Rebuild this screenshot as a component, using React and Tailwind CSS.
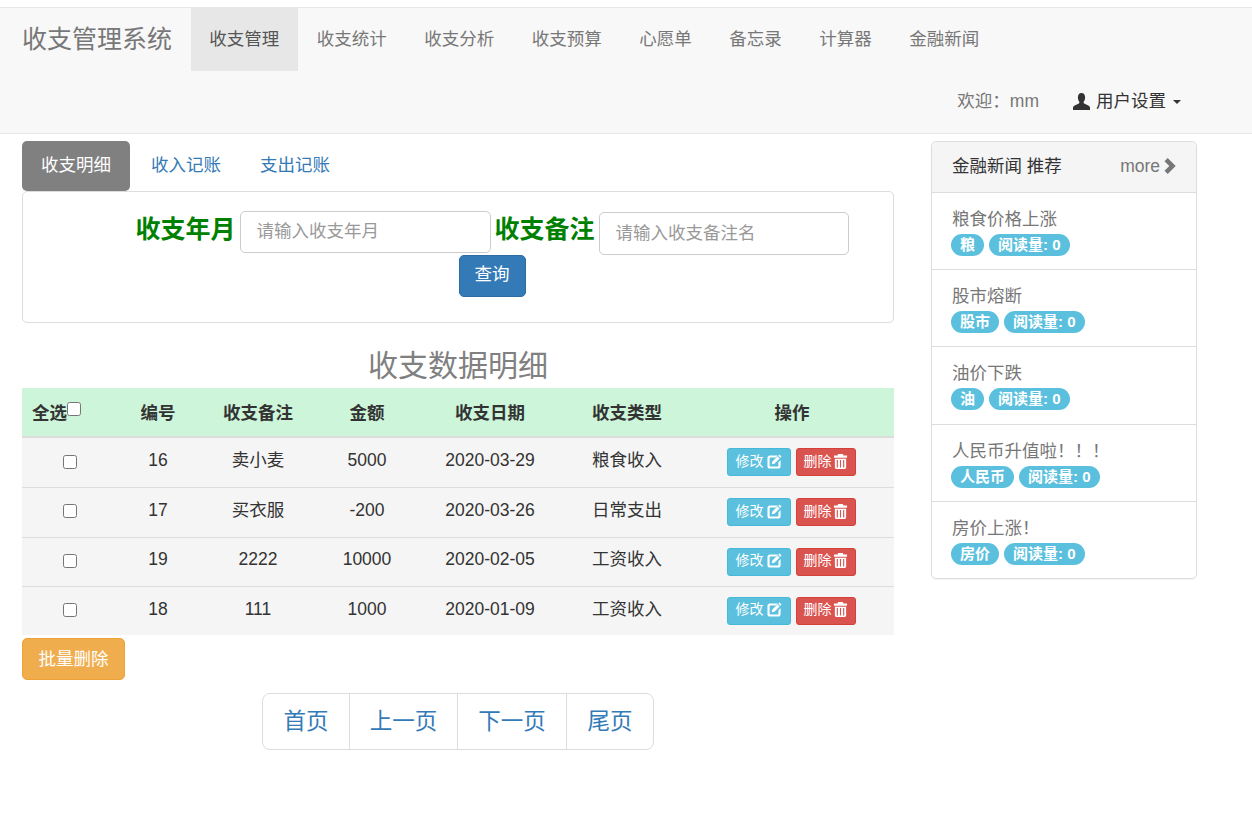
import React from "react";

const navItems = ["收支管理", "收支统计", "收支分析", "收支预算", "心愿单", "备忘录", "计算器", "金融新闻"];

const rows = [
  { id: 16, note: "卖小麦", amount: "5000", date: "2020-03-29", type: "粮食收入", h: "h-[50px]" },
  { id: 17, note: "买衣服", amount: "-200", date: "2020-03-26", type: "日常支出", h: "h-[50px]" },
  { id: 19, note: "2222", amount: "10000", date: "2020-02-05", type: "工资收入", h: "h-[49px]" },
  { id: 18, note: "111", amount: "1000", date: "2020-01-09", type: "工资收入", h: "h-[49px]" },
];

const news = [
  { title: "粮食价格上涨", tag: "粮", h: "h-[77px]" },
  { title: "股市熔断", tag: "股市", h: "h-[77px]" },
  { title: "油价下跌", tag: "油", h: "h-[78px]" },
  { title: "人民币升值啦！！！", tag: "人民币", h: "h-[77px]" },
  { title: "房价上涨！", tag: "房价", h: "h-[77px]" },
];

function UserIcon() {
  return (
    <svg viewBox="0 0 16 16" className="w-[17px] h-[17px] fill-[#333]">
      <path d="M8 0c2.300 0 3.400 1.700 3.400 4.200 0 1.700-.7 3.200-1.300 4.100-.3.4-.2 1.200.4 1.500l3.900 1.900c1 .5 1.600 1.200 1.600 2.200V16H0v-2.100c0-1 .6-1.700 1.600-2.200l3.900-1.900c.6-.3.7-1.100.4-1.500-.6-.9-1.300-2.400-1.300-4.100C4.600 1.700 5.700 0 8 0z" />
    </svg>
  );
}

function ChevronIcon() {
  return (
    <svg viewBox="0 0 12 16" className="w-[13px] h-[16px] fill-[#777]">
      <path d="M3.200 0 11.200 8l-8 8L0 12.800 4.800 8 0 3.200z" />
    </svg>
  );
}

function EditIcon() {
  return (
    <svg viewBox="0 0 16 16" className="w-[15px] h-[15px] fill-white">
      <path d="M3 1.500h8.500L9.300 3.800H3.500c-.4 0-.7.3-.7.700v8c0 .4.300.7.700.7h8c.4 0 .7-.3.700-.7V8.700l2.300-2.300v6.600c0 1.400-1.100 2.500-2.500 2.500H3C1.600 15.500.5 14.400.5 13V4C.5 2.600 1.600 1.500 3 1.500z" />
      <path d="M13.300.5 15.500 2.700 14.200 4 12 1.800zM11.300 2.500l2.200 2.200-5.600 5.600-2.900.7.700-2.900z" />
    </svg>
  );
}

function TrashIcon() {
  return (
    <svg viewBox="0 0 16 16" className="w-[15px] h-[15px] fill-white">
      <path d="M5.500 0h5l.7 1.500H15V4H1V1.500h3.800zM2 5h12v9.500c0 .8-.7 1.500-1.500 1.500h-9C2.700 16 2 15.300 2 14.500zm2 1.500V14.500h1.200V6.500zm3.400 0V14.500h1.200V6.500zm3.400 0V14.500H12V6.500z" />
    </svg>
  );
}

export default function App() {
  return (
    <div className="min-h-[816px] bg-white text-[17.5px] text-[#333] font-['Liberation_Sans','Noto_Sans_CJK_SC',sans-serif]">
      <div className="pt-[7px]">
        {/* Navbar */}
        <nav className="h-[127px] bg-[#f8f8f8] border-y border-[#e7e7e7] flex flex-col">
          <div className="flex h-[63px] pl-[22px]">
            <span className="text-[25px] text-[#777] leading-[62px] mr-[18.5px]">收支管理系统</span>
            {navItems.map((item, i) => (
              <a
                key={item}
                className={`px-[18.75px] leading-[62px] ${i === 0 ? "bg-[#e7e7e7] text-[#555]" : "text-[#777]"}`}
              >
                {item}
              </a>
            ))}
          </div>
          <div className="flex flex-1 items-center justify-end pr-[71px] pb-[2px]">
            <span className="text-[#777] mr-[34px]">欢迎：mm</span>
            <span className="flex items-center">
              <UserIcon />
              <span className="ml-[6px]">用户设置</span>
              <span className="ml-[7px] mt-[2px] w-0 h-0 border-x-[4.5px] border-x-transparent border-t-[4.5px] border-t-[#333]"></span>
            </span>
          </div>
        </nav>

        <div className="flex items-start pl-[22px] pt-[7px]">
          {/* Main */}
          <main className="w-[872px]">
            <div className="flex h-[50px] pb-[2px]">
              <a className="w-[108px] -mb-[2px] pb-[2px] bg-[#808080] text-white rounded-[5px] flex items-center justify-center">收支明细</a>
              <a className="ml-[21px] text-[#337ab7] flex items-center">收入记账</a>
              <a className="ml-[39px] text-[#337ab7] flex items-center">支出记账</a>
            </div>

            <form className="h-[132px] border border-[#ddd] rounded-[5px] pl-[68px]">
              <div className="flex justify-center pt-[19px]">
                <b className="text-[25px] text-[#008000] leading-[36px] mr-[4px]">收支年月</b>
                <input
                  placeholder="请输入收支年月"
                  className="w-[251px] h-[42px] pl-[16px] pr-[16px] pb-[2px] border border-[#ccc] rounded-[5px] outline-none placeholder:text-[#999]"
                />
                <b className="text-[25px] text-[#008000] leading-[36px] mx-[4px]">收支备注</b>
                <input
                  placeholder="请输入收支备注名"
                  className="w-[250px] h-[43px] mt-[1px] pl-[16px] pr-[16px] border border-[#ccc] rounded-[5px] outline-none placeholder:text-[#999]"
                />
              </div>
              <div className="flex justify-center">
                <button type="button" className="w-[67px] h-[42px] pb-[4px] bg-[#337ab7] border border-[#2e6da4] text-white rounded-[5px]">查询</button>
              </div>
            </form>

            <h2 className="text-[30px] text-[#808080] text-center leading-[40px] mt-[23px] mb-[2px]">收支数据明细</h2>

            <table className="w-[872px] table-fixed border-collapse text-center">
              <colgroup>
                <col className="w-[96px]" />
                <col className="w-[80px]" />
                <col className="w-[120px]" />
                <col className="w-[98px]" />
                <col className="w-[148px]" />
                <col className="w-[126px]" />
                <col className="w-[204px]" />
              </colgroup>
              <thead>
                <tr className="h-[49px] bg-[#ccf5d9] border-b-2 border-[#ddd]">
                  <th className="text-left pl-[10px] pt-[2px] font-bold">
                    全选<input type="checkbox" className="w-[14px] h-[14px] align-[3px]" />
                  </th>
                  <th className="pt-[2px] font-bold">编号</th>
                  <th className="pt-[2px] font-bold">收支备注</th>
                  <th className="pt-[2px] font-bold">金额</th>
                  <th className="pt-[2px] font-bold">收支日期</th>
                  <th className="pt-[2px] font-bold">收支类型</th>
                  <th className="pt-[2px] font-bold">操作</th>
                </tr>
              </thead>
              <tbody>
                {rows.map((r) => (
                  <tr key={r.id} className={`${r.h} bg-[#f5f5f5] border-b border-[#ddd] last:border-b-0`}>
                    <td className="pb-[4px]"><input type="checkbox" className="w-[14px] h-[14px] align-middle" /></td>
                    <td className="pb-[4px]">{r.id}</td>
                    <td className="pb-[4px]">{r.note}</td>
                    <td className="pb-[4px]">{r.amount}</td>
                    <td className="pb-[4px]">{r.date}</td>
                    <td className="pb-[4px]">{r.type}</td>
                    <td>
                      <div className="flex justify-center gap-[5px] pr-[2px]">
                        <button type="button" className="w-[64px] h-[28px] pb-[2px] bg-[#5bc0de] border border-[#46b8da] rounded-[3px] text-white text-[14px] flex items-center justify-center gap-[3px]">
                          修改<EditIcon />
                        </button>
                        <button type="button" className="w-[60px] h-[28px] pb-[2px] bg-[#d9534f] border border-[#d43f3a] rounded-[3px] text-white text-[14px] flex items-center justify-center gap-[1px]">
                          删除<TrashIcon />
                        </button>
                      </div>
                    </td>
                  </tr>
                ))}
              </tbody>
            </table>

            <button type="button" className="block w-[103px] h-[42px] mt-[3px] bg-[#f0ad4e] border border-[#eea236] rounded-[5px] text-white">批量删除</button>

            {/* Pagination */}
            <div className="flex w-[392px] h-[57px] mt-[13px] ml-[240px] border border-[#ddd] rounded-[8px] text-[22.5px] text-[#337ab7]">
              <a className="w-[86px] flex items-center justify-center">首页</a>
              <a className="w-[108px] flex items-center justify-center border-l border-[#ddd]">上一页</a>
              <a className="w-[109px] flex items-center justify-center border-l border-[#ddd]">下一页</a>
              <a className="flex-1 flex items-center justify-center border-l border-[#ddd]">尾页</a>
            </div>
          </main>

          {/* Sidebar */}
          <aside className="w-[266px] ml-[37px] border border-[#ddd] rounded-[5px] shadow-[0_1px_1px_rgba(0,0,0,0.05)]">
            <div className="h-[50px] pb-[2px] bg-[#f5f5f5] rounded-t-[5px] flex items-center justify-between pl-[20px] pr-[19px]">
              <span>金融新闻 推荐</span>
              <span className="flex items-center text-[#777] gap-[4px]">more<ChevronIcon /></span>
            </div>
            {news.map((n) => (
              <div key={n.title} className={`${n.h} border-t border-[#ddd] pl-[19px] pt-[13px]`}>
                <div className="text-[#777] leading-[26px] pl-[1px]">{n.title}</div>
                <div className="flex gap-[5px] mt-[2px]">
                  <span className="h-[22px] px-[9px] rounded-full bg-[#5bc0de] text-white text-[15px] font-bold leading-[22px]">{n.tag}</span>
                  <span className="h-[22px] px-[9px] rounded-full bg-[#5bc0de] text-white text-[15px] font-bold leading-[22px]">阅读量: 0</span>
                </div>
              </div>
            ))}
          </aside>
        </div>
      </div>
    </div>
  );
}
